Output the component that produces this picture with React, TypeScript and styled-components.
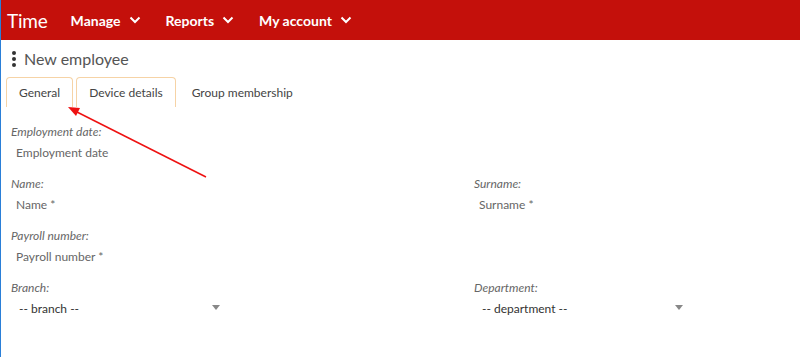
import React from 'react';
import styled, { createGlobalStyle } from 'styled-components';

const GlobalStyle = createGlobalStyle`
  html, body {
    margin: 0;
    padding: 0;
    background: #fff;
    font-family: Lato, 'Open Sans', sans-serif;
  }
`;

const Page = styled.div`
  position: relative;
  width: 800px;
  height: 357px;
  overflow: hidden;
  border-left: 1px solid #2a7fd8;
  box-sizing: border-box;
`;

const TopBar = styled.header`
  display: flex;
  align-items: center;
  height: 40px;
  background: #c4100b;
  color: #fff;
  padding: 0 0 0 6px;
`;

const Brand = styled.div`
  font-size: 19px;
  margin-right: 23px;
  letter-spacing: -0.2px;
`;

const NavItem = styled.div`
  display: flex;
  align-items: center;
  gap: 8px;
  font-size: 14px;
  font-weight: 700;
  margin-right: 25px;
`;

const Chevron = () => (
  <svg width="12" height="8" viewBox="0 0 12 8">
    <path d="M1.5 1.5 L6 6 L10.5 1.5" fill="none" stroke="#fff" strokeWidth="2" />
  </svg>
);

const TitleRow = styled.div`
  display: flex;
  align-items: center;
  gap: 8px;
  height: 37px;
  padding: 0 0 0 11px;
  color: #555;
  font-size: 16px;
`;

const Kebab = styled.div`
  display: flex;
  flex-direction: column;
  gap: 2px;
  span {
    width: 4px;
    height: 4px;
    border-radius: 50%;
    background: #333;
  }
`;

const Tabs = styled.div`
  display: flex;
  padding-left: 5px;
  gap: 3px;
`;

const Tab = styled.div<{ $framed?: boolean }>`
  height: 29px;
  display: flex;
  align-items: center;
  padding: 0 12px;
  font-size: 12px;
  color: #444;
  border: 1px solid ${({ $framed }) => ($framed ? '#f6d3a6' : 'transparent')};
  border-bottom: none;
  border-radius: 4px 4px 0 0;
`;

const Form = styled.div`
  display: grid;
  grid-template-columns: 463px 1fr;
  padding: 17px 0 0 10px;
`;

const Field = styled.div<{ $span?: boolean }>`
  grid-column: ${({ $span }) => ($span ? '1 / span 2' : 'auto')};
  margin-bottom: 12px;
`;

const Label = styled.div`
  font-size: 12px;
  font-style: italic;
  line-height: 16px;
  color: #666;
`;

const Value = styled.div`
  height: 24px;
  display: flex;
  align-items: center;
  padding-left: 5px;
  font-size: 12px;
  color: #666;
`;

const Select = styled.div`
  width: 209px;
  height: 24px;
  display: flex;
  align-items: center;
  justify-content: space-between;
  padding: 0 0 0 8px;
  box-sizing: border-box;
  font-size: 12px;
  color: #333;
`;

const Caret = () => (
  <svg width="8" height="6" viewBox="0 0 8 6">
    <path d="M0 0 H8 L4 5 Z" fill="#888" />
  </svg>
);

const Pointer = styled.svg`
  position: absolute;
  left: 0;
  top: 0;
  pointer-events: none;
`;

export default function App() {
  return (
    <Page>
      <GlobalStyle />
      <TopBar>
        <Brand>Time</Brand>
        <NavItem>Manage <Chevron /></NavItem>
        <NavItem>Reports <Chevron /></NavItem>
        <NavItem>My account <Chevron /></NavItem>
      </TopBar>
      <TitleRow>
        <Kebab><span /><span /><span /></Kebab>
        New employee
      </TitleRow>
      <Tabs>
        <Tab $framed>General</Tab>
        <Tab $framed>Device details</Tab>
        <Tab>Group membership</Tab>
      </Tabs>
      <Form>
        <Field $span>
          <Label>Employment date:</Label>
          <Value>Employment date</Value>
        </Field>
        <Field>
          <Label>Name:</Label>
          <Value>Name *</Value>
        </Field>
        <Field>
          <Label>Surname:</Label>
          <Value>Surname *</Value>
        </Field>
        <Field $span>
          <Label>Payroll number:</Label>
          <Value>Payroll number *</Value>
        </Field>
        <Field>
          <Label>Branch:</Label>
          <Select>-- branch -- <Caret /></Select>
        </Field>
        <Field>
          <Label>Department:</Label>
          <Select>-- department -- <Caret /></Select>
        </Field>
      </Form>
      <Pointer width="800" height="357">
        <line x1="205" y1="177" x2="74" y2="111" stroke="#ee1111" strokeWidth="1.5" />
        <path d="M67 107 L79 108 L75 116 Z" fill="#ee1111" />
      </Pointer>
    </Page>
  );
}
